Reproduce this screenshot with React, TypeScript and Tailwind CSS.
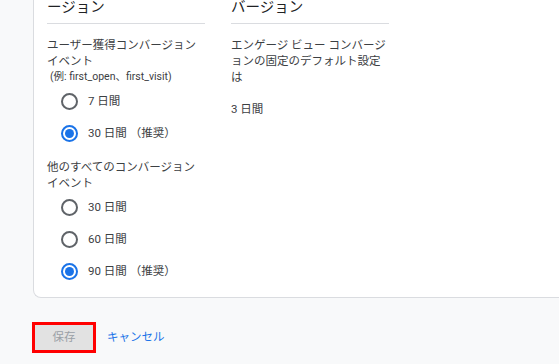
const font = 'font-["Roboto","Noto_Sans_CJK_JP",sans-serif]';

function Radio({ label, checked }: { label: string; checked?: boolean }) {
  return (
    <div className="flex h-[32px] items-center pl-[14px]">
      <span
        className={`flex h-[17px] w-[17px] items-center justify-center rounded-full border-2 ${
          checked ? 'border-[#1a73e8]' : 'border-[#5f6368]'
        }`}
      >
        {checked && <span className="h-[9px] w-[9px] rounded-full bg-[#1a73e8]" />}
      </span>
      <span className="ml-[10px] text-[11.5px] leading-[16px] text-[#3c4043]">{label}</span>
    </div>
  );
}

export default function App() {
  return (
    <div className={`h-[364px] w-[559px] overflow-hidden bg-[#f8f9fa] ${font}`}>
      <div className="ml-[33px] h-[298px] w-[540px] rounded-bl-lg border-b border-l border-[#dadce0] bg-white pl-[13px]">
        <div className="flex gap-[26px]">
          <div className="w-[158px]">
            <div className="h-[24px] border-b border-[#dadce0] text-[14.5px] leading-[16px] text-[#202124]">
              ージョン
            </div>
            <div className="mt-[13px] text-[11.5px] leading-[16px] text-[#3c4043]">
              <div>ユーザー獲得コンバージョン</div>
              <div>イベント</div>
              <div className="whitespace-nowrap pl-[3px] text-[10.5px]">(例: first_open、first_visit)</div>
            </div>
            <div>
              <Radio label="7 日間" />
              <Radio label="30 日間 （推奨）" checked />
            </div>
            <div className="mt-[10px] text-[11.5px] leading-[16px] text-[#3c4043]">
              <div>他のすべてのコンバージョン</div>
              <div>イベント</div>
            </div>
            <div>
              <Radio label="30 日間" />
              <Radio label="60 日間" />
              <Radio label="90 日間 （推奨）" checked />
            </div>
          </div>
          <div className="w-[158px]">
            <div className="h-[24px] border-b border-[#dadce0] text-[14.5px] leading-[16px] text-[#202124]">
              バージョン
            </div>
            <div className="mt-[13px] text-[11.5px] leading-[16px] text-[#3c4043]">
              <div className="whitespace-nowrap">エンゲージ ビュー コンバージ</div>
              <div className="whitespace-nowrap">ョンの固定のデフォルト設定</div>
              <div>は</div>
              <div className="mt-[16px]">3 日間</div>
            </div>
          </div>
        </div>
      </div>
      <div className="mt-[24px] flex items-center pl-[32px]">
        <div className="border-[3px] border-[#ff0000]">
          <button className="flex h-[25px] w-[58px] items-center justify-center bg-[#e2e2e2] text-[11.5px] text-[#9aa0a6]">
            保存
          </button>
        </div>
        <span className="ml-[11px] text-[11.5px] text-[#1a73e8]">キャンセル</span>
      </div>
    </div>
  );
}
